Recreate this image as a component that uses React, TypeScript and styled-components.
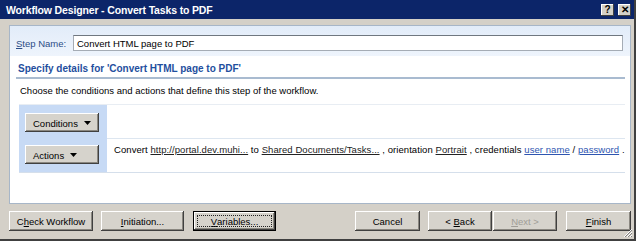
import React from "react";
import styled, { createGlobalStyle, css } from "styled-components";

const Global = createGlobalStyle`
  html, body { margin: 0; padding: 0; background: #ffffff; }
  body { width: 640px; height: 241px; overflow: hidden; }
  * { box-sizing: border-box; }
`;

const font = `"Liberation Sans", Arial, sans-serif`;

const Window = styled.div`
  width: 636px;
  height: 241px;
  background: #d4d0c8;
  border-right: 2px solid #404040;
  border-bottom: 2px solid #404040;
  display: flex;
  flex-direction: column;
  font-family: ${font};
  font-size: 9.5px;
  color: #000;
  position: relative;
`;

const TitleBar = styled.div`
  height: 19px;
  background: #0c2569;
  display: flex;
  align-items: center;
  padding: 0 3px 0 6px;
  color: #fff;
  font-weight: bold;
  font-size: 10.5px;
`;

const TitleText = styled.div`
  flex: 1;
  letter-spacing: -0.15px;
`;

const CapButton = styled.div<{ $gap?: number }>`
  width: 13px;
  height: 12px;
  margin-left: ${(p) => p.$gap ?? 0}px;
  background: #d4d0c8;
  box-shadow: inset -1px -1px #404040, inset 1px 1px #fff;
  display: flex;
  align-items: center;
  justify-content: center;
  color: #000;
  font-size: 10px;
  font-weight: bold;
  line-height: 1;
`;

const Body = styled.div`
  flex: 1;
  display: flex;
  flex-direction: column;
  padding: 6px 3px 0 9px;
`;

const Panel = styled.div`
  height: 179px;
  background: #fff;
  border: 1px solid #a7b6c8;
  display: flex;
  flex-direction: column;
`;

const StepSection = styled.div`
  height: 30px;
  background: linear-gradient(#e2ecf9, #eef4fc);
  display: flex;
  align-items: center;
  padding: 4px 7px 0 6px;
`;

const StepLabel = styled.div`
  width: 57px;
  color: #2c4d86;
`;

const StepInput = styled.div`
  flex: 1;
  height: 16px;
  background: #fff;
  border: 1px solid #a5acb5;
  border-top-color: #6f7780;
  display: flex;
  align-items: center;
  padding-left: 3px;
`;

const SectionHeader = styled.div`
  margin: 7px 5px 0 6px;
  padding: 0 0 3px 2px;
  border-bottom: 2px solid #a9bbd0;
  color: #1f4f9e;
  font-weight: bold;
  font-size: 10px;
`;

const Description = styled.div`
  padding: 6px 0 0 10px;
  height: 25px;
`;

const RuleTable = styled.div`
  margin: 0 5px 0 9px;
  border-top: 1px solid #e8edf3;
  border-bottom: 1px solid #d5dfeb;
  display: grid;
  grid-template-columns: 88px 1fr;
  grid-template-rows: 34px 33px;
`;

const LeftCell = styled.div<{ $top: number }>`
  background: #c7daf5;
  display: flex;
  align-items: flex-start;
  padding: ${(p) => p.$top}px 0 0 6px;
`;

const RightCell = styled.div<{ $first?: boolean }>`
  display: flex;
  align-items: flex-start;
  padding: 5px 0 0 7px;
  ${(p) =>
    p.$first &&
    css`
      border-bottom: 1px solid #dde6f0;
    `}
`;

const bevel = css`
  background: #d6d3cc;
  box-shadow: inset -1px -1px #404040, inset 1px 1px #ffffff,
    inset -2px -2px #8a8780;
`;

const MenuButton = styled.div`
  ${bevel}
  width: 74px;
  height: 19px;
  display: flex;
  align-items: center;
  padding-left: 8px;
  gap: 6px;
  padding-top: 1px;
`;

const Link = styled.span<{ $blue?: boolean }>`
  text-decoration: underline;
  color: ${(p) => (p.$blue ? "#2e55b0" : "#222")};
`;

const ActionText = styled.div`
  white-space: nowrap;
  letter-spacing: 0.07px;
`;

const Footer = styled.div`
  display: flex;
  align-items: center;
  padding: 7px 0 0 0;
`;

const DlgButton = styled.div<{ $w: number; $gap?: number; $focus?: boolean; $disabled?: boolean }>`
  ${bevel}
  width: ${(p) => p.$w}px;
  height: 20px;
  margin-left: ${(p) => p.$gap ?? 0}px;
  display: flex;
  align-items: center;
  justify-content: center;
  font-size: 9.5px;
  white-space: pre;
  color: ${(p) => (p.$disabled ? "#a09d97" : "#000")};
  position: relative;
  ${(p) =>
    p.$focus &&
    css`
      box-shadow: inset 0 0 0 1px #000, inset -2px -2px #404040, inset 2px 2px #ffffff,
        inset -3px -3px #8a8780;
      &::after {
        content: "";
        position: absolute;
        inset: 4px;
        border: 1px dotted #222;
      }
    `}
`;

const Spacer = styled.div`
  flex: 1;
`;

const Grip = styled.svg`
  position: absolute;
  right: 1px;
  bottom: 1px;
`;

const Triangle = () => (
  <svg width="7" height="4" viewBox="0 0 7 4">
    <path d="M0 0h7L3.5 4z" fill="#000" />
  </svg>
);

export default function App() {
  return (
    <>
      <Global />
      <Window>
        <TitleBar>
          <TitleText>Workflow Designer - Convert Tasks to PDF</TitleText>
          <CapButton>?</CapButton>
          <CapButton $gap={4}>✕</CapButton>
        </TitleBar>
        <Body>
          <Panel>
            <StepSection>
              <StepLabel>
                <u>S</u>tep Name:
              </StepLabel>
              <StepInput>Convert HTML page to PDF</StepInput>
            </StepSection>
            <SectionHeader>Specify details for 'Convert HTML page to PDF'</SectionHeader>
            <Description>Choose the conditions and actions that define this step of the workflow.</Description>
            <RuleTable>
              <LeftCell $top={8}>
                <MenuButton>
                  Conditions <Triangle />
                </MenuButton>
              </LeftCell>
              <RightCell $first />
              <LeftCell $top={6}>
                <MenuButton>
                  Actions <Triangle />
                </MenuButton>
              </LeftCell>
              <RightCell>
                <ActionText>
                  Convert <Link>http://portal.dev.muhi...</Link> to <Link>Shared Documents/Tasks...</Link> ,
                  orientation <Link>Portrait</Link> , credentials <Link $blue>user name</Link> /{" "}
                  <Link $blue>password</Link> .
                </ActionText>
              </RightCell>
            </RuleTable>
          </Panel>
          <Footer>
            <DlgButton $w={84}>
              C<u>h</u>eck Workflow
            </DlgButton>
            <DlgButton $w={83} $gap={8}>
              <u>I</u>nitiation...
            </DlgButton>
            <DlgButton $w={83} $gap={9} $focus>
              <u>V</u>ariables...
            </DlgButton>
            <Spacer />
            <DlgButton $w={65}>Cancel</DlgButton>
            <DlgButton $w={64} $gap={8}>
              {"< "}
              <u>B</u>ack
            </DlgButton>
            <DlgButton $w={64} $gap={1} $disabled>
              <u>N</u>ext{" >"}
            </DlgButton>
            <DlgButton $w={65} $gap={9}>
              <u>F</u>inish
            </DlgButton>
          </Footer>
        </Body>
        <Grip width="11" height="11" viewBox="0 0 11 11">
          <path d="M10 2L2 10M10 5L5 10M10 8L8 10" stroke="#fff" strokeWidth="1" />
          <path d="M10 3L3 10M10 6L6 10M10 9L9 10" stroke="#808080" strokeWidth="1" />
        </Grip>
      </Window>
    </>
  );
}
